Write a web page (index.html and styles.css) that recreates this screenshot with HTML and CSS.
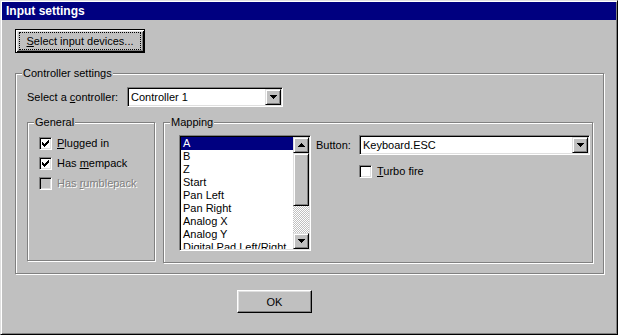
FILE: index.html
```html
<!DOCTYPE html>
<html lang="en">
<head>
  <meta charset="UTF-8">
  <title>Input settings</title>
  <link rel="stylesheet" href="styles.css">
</head>
<body>
  <div class="window">
    <div class="titlebar">Input settings</div>

    <div class="client">
      <button class="btn btn-default"><span class="focus"><u>S</u>elect input devices...</span></button>

      <div class="group">
        <div class="group-title">Controller settings</div>
        <div class="group-body outer-body">
          <div class="field-row">
            <span class="field-label">Select a <u>c</u>ontroller:</span>
            <div class="combo combo-controller">
              <span class="combo-text">Controller 1</span>
              <span class="combo-btn">
                <svg width="7" height="4" viewBox="0 0 7 4" shape-rendering="crispEdges"><path d="M0 0h7v1H6v1H5v1H4v1H3V3H2V2H1V1H0z"/></svg>
              </span>
            </div>
          </div>

          <div class="subgroups">
            <div class="group group-general">
              <div class="group-title">General</div>
              <div class="group-body general-body">
                <div class="check">
                  <span class="box">
                    <svg width="7" height="7" viewBox="0 0 7 7" shape-rendering="crispEdges"><path d="M6 0h1v1H6zM5 1h2v1H5zM0 2h1v1H0zM4 2h3v1H4zM0 3h2v1H0zM3 3h3v1H3zM0 4h5v1H0zM1 5h3v1H1zM2 6h1v1H2z"/></svg>
                  </span>
                  <span><u>P</u>lugged in</span>
                </div>
                <div class="check">
                  <span class="box">
                    <svg width="7" height="7" viewBox="0 0 7 7" shape-rendering="crispEdges"><path d="M6 0h1v1H6zM5 1h2v1H5zM0 2h1v1H0zM4 2h3v1H4zM0 3h2v1H0zM3 3h3v1H3zM0 4h5v1H0zM1 5h3v1H1zM2 6h1v1H2z"/></svg>
                  </span>
                  <span>Has <u>m</u>empack</span>
                </div>
                <div class="check disabled">
                  <span class="box"></span>
                  <span>Has <u>r</u>umblepack</span>
                </div>
              </div>
            </div>

            <div class="group group-mapping">
              <div class="group-title">Mapping</div>
              <div class="group-body mapping-body">
                <div class="listbox">
                  <ul class="list-items">
                    <li class="selected">A</li>
                    <li>B</li>
                    <li>Z</li>
                    <li>Start</li>
                    <li>Pan Left</li>
                    <li>Pan Right</li>
                    <li>Analog X</li>
                    <li>Analog Y</li>
                    <li>Digital Pad Left/Right</li>
                  </ul>
                  <div class="scrollbar">
                    <span class="sb-btn">
                      <svg width="7" height="4" viewBox="0 0 7 4" shape-rendering="crispEdges"><path d="M3 0h1v1h1v1h1v1h1v1H0V3h1V2h1V1h1z"/></svg>
                    </span>
                    <span class="sb-thumb"></span>
                    <span class="sb-track"></span>
                    <span class="sb-btn">
                      <svg width="7" height="4" viewBox="0 0 7 4" shape-rendering="crispEdges"><path d="M0 0h7v1H6v1H5v1H4v1H3V3H2V2H1V1H0z"/></svg>
                    </span>
                  </div>
                </div>

                <div class="mapping-side">
                  <div class="field-row">
                    <span class="button-label">Button:</span>
                    <div class="combo combo-button">
                      <span class="combo-text">Keyboard.ESC</span>
                      <span class="combo-btn">
                        <svg width="7" height="4" viewBox="0 0 7 4" shape-rendering="crispEdges"><path d="M0 0h7v1H6v1H5v1H4v1H3V3H2V2H1V1H0z"/></svg>
                      </span>
                    </div>
                  </div>
                  <div class="check turbo">
                    <span class="box"></span>
                    <span><u>T</u>urbo fire</span>
                  </div>
                </div>
              </div>
            </div>
          </div>
        </div>
      </div>

      <button class="btn btn-ok">OK</button>
    </div>
  </div>
</body>
</html>
```

FILE: styles.css
```css
body {
  margin: 0;
  font-family: "Liberation Sans", Arial, sans-serif;
  font-size: 11px;
  color: #000;
  background: #c0c0c0;
}
u {
  text-decoration-thickness: 1px;
  text-underline-offset: 1px;
}
.window {
  width: 618px;
  height: 335px;
  box-sizing: border-box;
  background: #c0c0c0;
  border: 1px solid;
  border-color: #dfdfdf #000 #000 #dfdfdf;
  padding: 1px;
  box-shadow: inset 1px 1px #fff, inset -1px -1px #808080;
}
.titlebar {
  height: 18px;
  background: #000080;
  color: #fff;
  font-weight: bold;
  font-size: 12px;
  line-height: 18px;
  padding-left: 4px;
}
.client {
  padding: 9px 12px 0 13px;
}

/* buttons */
.btn {
  display: block;
  box-sizing: border-box;
  background: #c0c0c0;
  font: inherit;
  color: #000;
  border: 1px solid;
  border-color: #fff #000 #000 #fff;
  box-shadow: inset -1px -1px #808080, inset 1px 1px #dfdfdf;
  padding: 0;
  margin: 0;
}
.btn-default {
  width: 130px;
  height: 24px;
  display: flex;
  padding: 2px 3px;
  border-color: #000;
  box-shadow: inset 1px 1px #fff, inset -1px -1px #000, inset 2px 2px #dfdfdf, inset -2px -2px #808080;
}
.focus {
  flex: 1;
  display: flex;
  align-items: center;
  justify-content: center;
  border: 1px dotted #000;
}
.btn-ok {
  width: 75px;
  height: 23px;
  margin: 16px 0 0 222px;
}

/* group boxes */
.group {
  box-sizing: border-box;
  border: 1px solid #808080;
  box-shadow: 1px 1px 0 #fff, inset 1px 1px 0 #fff;
}
.client > .group {
  margin-top: 20px;
}
.group-title {
  width: fit-content;
  margin: -7px 0 0 6px;
  padding: 0 1px;
  line-height: 13px;
  background: #c0c0c0;
}
.outer-body {
  padding: 7px 10px 10px 11px;
}
.field-row {
  display: flex;
  align-items: center;
}
.field-label {
  width: 100px;
}
.subgroups {
  display: flex;
  align-items: flex-start;
  gap: 8px;
  margin-top: 15px;
}
.group-general {
  width: 128px;
  height: 139px;
}
.group-mapping {
  flex: 1;
  height: 141px;
}
.general-body {
  padding: 8px 0 0 11px;
  display: flex;
  flex-direction: column;
  gap: 7px;
}
.mapping-body {
  padding: 6px 2px 0 15px;
  display: flex;
}

/* checkboxes */
.check {
  display: flex;
  align-items: center;
  gap: 5px;
  line-height: 13px;
}
.box {
  width: 13px;
  height: 13px;
  box-sizing: border-box;
  display: flex;
  align-items: center;
  justify-content: center;
  background: #fff;
  border: 1px solid;
  border-color: #808080 #fff #fff #808080;
  box-shadow: inset 1px 1px #000, inset -1px -1px #dfdfdf;
}
.disabled {
  color: #808080;
  text-shadow: 1px 1px 0 #fff;
}
.disabled .box {
  background: #c0c0c0;
}
.turbo {
  margin-top: 10px;
}

/* combo boxes */
.combo {
  height: 20px;
  box-sizing: border-box;
  display: flex;
  align-items: center;
  padding: 1px;
  background: #fff;
  border: 1px solid;
  border-color: #808080 #fff #fff #808080;
  box-shadow: inset 1px 1px #000, inset -1px -1px #dfdfdf;
}
.combo-controller {
  width: 156px;
}
.combo-button {
  width: 231px;
}
.combo-text {
  flex: 1;
  padding-left: 2px;
  white-space: nowrap;
}
.combo-btn,
.sb-btn {
  width: 16px;
  height: 16px;
  box-sizing: border-box;
  display: flex;
  align-items: center;
  justify-content: center;
  background: #c0c0c0;
  border: 1px solid;
  border-color: #dfdfdf #000 #000 #dfdfdf;
  box-shadow: inset 1px 1px #fff, inset -1px -1px #808080;
}

/* list box */
.listbox {
  width: 132px;
  height: 116px;
  box-sizing: border-box;
  display: flex;
  padding: 1px;
  background: #fff;
  border: 1px solid;
  border-color: #808080 #fff #fff #808080;
  box-shadow: inset 1px 1px #000, inset -1px -1px #dfdfdf;
}
.list-items {
  flex: 1;
  margin: 0;
  padding: 0;
  list-style: none;
  overflow: hidden;
}
.list-items li {
  height: 13px;
  line-height: 13px;
  padding-left: 2px;
  white-space: nowrap;
}
.list-items .selected {
  background: #000080;
  color: #fff;
}
.scrollbar {
  width: 16px;
  display: flex;
  flex-direction: column;
}
.sb-thumb {
  height: 53px;
  box-sizing: border-box;
  background: #c0c0c0;
  border: 1px solid;
  border-color: #dfdfdf #000 #000 #dfdfdf;
  box-shadow: inset 1px 1px #fff, inset -1px -1px #808080;
}
.sb-track {
  flex: 1;
  background: repeating-conic-gradient(#fff 0 25%, #c0c0c0 0 50%) 0 0 / 2px 2px;
}
.mapping-side {
  margin-left: 5px;
  flex: 1;
}
.button-label {
  width: 43px;
}
.turbo {
  margin-left: 43px;
}
```
